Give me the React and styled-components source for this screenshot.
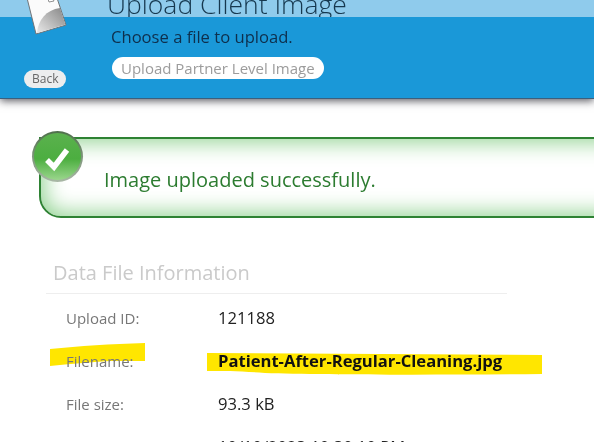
import React from "react";
import styled, { createGlobalStyle } from "styled-components";

const GlobalStyle = createGlobalStyle`
  html, body { margin: 0; padding: 0; background: #fff; }
  body { font-family: "Open Sans", "Liberation Sans", sans-serif; }
`;

const Page = styled.div`
  width: 594px;
  height: 442px;
  overflow: hidden;
  position: relative;
`;

const Header = styled.header`
  position: relative;
  height: 98px;
  background: #1a98d8;
  border-bottom: 1px solid #3c5f7c;
  box-shadow: 0 2px 8px rgba(20, 20, 30, 0.7);
`;

const TitleBand = styled.div`
  height: 17px;
  background: #8fcbec;
  padding-left: 107px;
  overflow: hidden;
`;

const Title = styled.h1`
  margin: -14px 0 0;
  font-size: 26.5px;
  line-height: 36px;
  font-weight: 300;
  color: #16384f;
  white-space: nowrap;
`;

const HeaderBody = styled.div`
  display: flex;
  height: 81px;
`;

const BackColumn = styled.div`
  width: 111px;
  display: flex;
  align-items: flex-start;
  padding: 53px 0 0 24px;
  box-sizing: border-box;
`;

const BackButton = styled.span`
  height: 18px;
  padding: 0 8px;
  border-radius: 9px;
  background: #ecedee;
  color: #666;
  font-size: 12px;
  line-height: 18px;
`;

const Intro = styled.div`
  padding-top: 9px;
  display: flex;
  flex-direction: column;
  align-items: flex-start;
`;

const Lead = styled.div`
  font-size: 16.6px;
  line-height: 22px;
  color: #0e2f4c;
`;

const PillLink = styled.span`
  margin-top: 9px;
  margin-left: 1px;
  height: 22px;
  padding: 0 9px;
  border-radius: 11px;
  background: #fff;
  color: #9c9c9c;
  font-size: 15px;
  line-height: 22px;
`;

const DocIcon = styled.svg`
  position: absolute;
  left: 20px;
  top: 0;
`;

const Content = styled.main`
  padding: 38px 0 0 39px;
`;

const SuccessBox = styled.div`
  position: relative;
  box-sizing: border-box;
  width: 600px;
  height: 81px;
  padding: 27px 0 0 63px;
  border: 2px solid #2e8233;
  border-radius: 0 0 0 22px;
  background: #fff;
  box-shadow: inset 0 0 22px 3px #8fd28f;
  color: #2c7c30;
  font-size: 20px;
  line-height: 28px;
`;

const SuccessIcon = styled.svg`
  position: absolute;
  left: -11px;
  top: -10px;
`;

const InfoSection = styled.section`
  margin: 41px 0 0 7px;
  width: 461px;
`;

const SectionTitle = styled.h2`
  margin: 0;
  padding: 0 0 6px 7px;
  border-bottom: 1px solid #eeeeee;
  font-size: 20px;
  line-height: 28px;
  font-weight: 400;
  color: #cacaca;
`;

const InfoRow = styled.div`
  position: relative;
  display: flex;
  height: 43px;
  align-items: center;
  padding-left: 20px;
  &:first-of-type { margin-top: 2px; }
`;

const Label = styled.span`
  position: relative;
  width: 152px;
  flex: none;
  font-size: 15px;
  color: #777;
`;

const Value = styled.span`
  position: relative;
  font-size: 16.6px;
  white-space: nowrap;
  font-weight: ${(p) => (p.$bold ? 700 : 400)};
  color: ${(p) => (p.$bold ? "#111" : "#222")};
`;

const Marker = styled.svg`
  position: absolute;
  left: 0;
  top: 0;
  overflow: visible;
  mix-blend-mode: multiply;
`;

const rows = [
  { label: "Upload ID:", value: "121188" },
  { label: "Filename:", value: "Patient-After-Regular-Cleaning.jpg", bold: true, marked: true },
  { label: "File size:", value: "93.3 kB" },
  { label: "Created:", value: "10/10/2023 10:30:10 PM" },
];

function FileIcon() {
  return (
    <DocIcon width="50" height="36" viewBox="20 0 50 36">
      <defs>
        <linearGradient id="fold" gradientUnits="userSpaceOnUse" x1="62" y1="10" x2="40" y2="32">
          <stop offset="0" stopColor="#8f8f8f" />
          <stop offset="1" stopColor="#e2e2e2" />
        </linearGradient>
      </defs>
      <path d="M27 -2 L57 -2 L66 25 L36 34 Z" fill="#fbfbfb" stroke="#6f7478" strokeWidth="1" />
      <path d="M37 33 C38 20 46 10 60 8 L65.4 24.6 Z" fill="url(#fold)" />
      <path d="M48 -1 L49 2 L54 1 L53 -1 Z" fill="#fff" stroke="#777" strokeWidth="0.8" />
    </DocIcon>
  );
}

function CheckBadge() {
  return (
    <SuccessIcon width="56" height="56" viewBox="0 0 56 56">
      <defs>
        <linearGradient id="ball" x1="0" y1="0" x2="0" y2="1">
          <stop offset="0" stopColor="#5bb14e" />
          <stop offset="0.55" stopColor="#4cae40" />
          <stop offset="1" stopColor="#9ad68c" />
        </linearGradient>
        <linearGradient id="ring" x1="0" y1="0" x2="0" y2="1">
          <stop offset="0" stopColor="#4f6f4b" />
          <stop offset="1" stopColor="#a9b8a6" />
        </linearGradient>
      </defs>
      <circle cx="27.5" cy="27.5" r="25.5" fill="url(#ring)" />
      <circle cx="27.5" cy="27.5" r="23.5" fill="url(#ball)" />
      <path d="M17 31 L24 38 L37 21" fill="none" stroke="#fff" strokeWidth="5.5" />
    </SuccessIcon>
  );
}

// hand drawn highlighter strokes, in page coordinates
function HighlightMarks() {
  return (
    <Marker width="500" height="40" viewBox="46 340 500 40">
      <path d="M50 350 C80 347 110 345 145 344 L145 362 L110 362 C90 363 70 365 50 367 Z" fill="#ffe600" />
      <path d="M207 354 L380 355 L542 356 L542 375 C440 376 320 376 265 374 C240 372 225 372 207 372 Z" fill="#ffe600" />
    </Marker>
  );
}

export default function App() {
  return (
    <Page>
      <GlobalStyle />
      <Header>
        <TitleBand>
          <Title>Upload Client Image</Title>
        </TitleBand>
        <HeaderBody>
          <BackColumn>
            <BackButton>Back</BackButton>
          </BackColumn>
          <Intro>
            <Lead>Choose a file to upload.</Lead>
            <PillLink>Upload Partner Level Image</PillLink>
          </Intro>
        </HeaderBody>
        <FileIcon />
      </Header>
      <Content>
        <SuccessBox>
          <CheckBadge />
          Image uploaded successfully.
        </SuccessBox>
        <InfoSection>
          <SectionTitle>Data File Information</SectionTitle>
          {rows.map((row) => (
            <InfoRow key={row.label}>
              {row.marked && <HighlightMarks />}
              <Label>{row.label}</Label>
              <Value $bold={row.bold}>{row.value}</Value>
            </InfoRow>
          ))}
        </InfoSection>
      </Content>
    </Page>
  );
}
